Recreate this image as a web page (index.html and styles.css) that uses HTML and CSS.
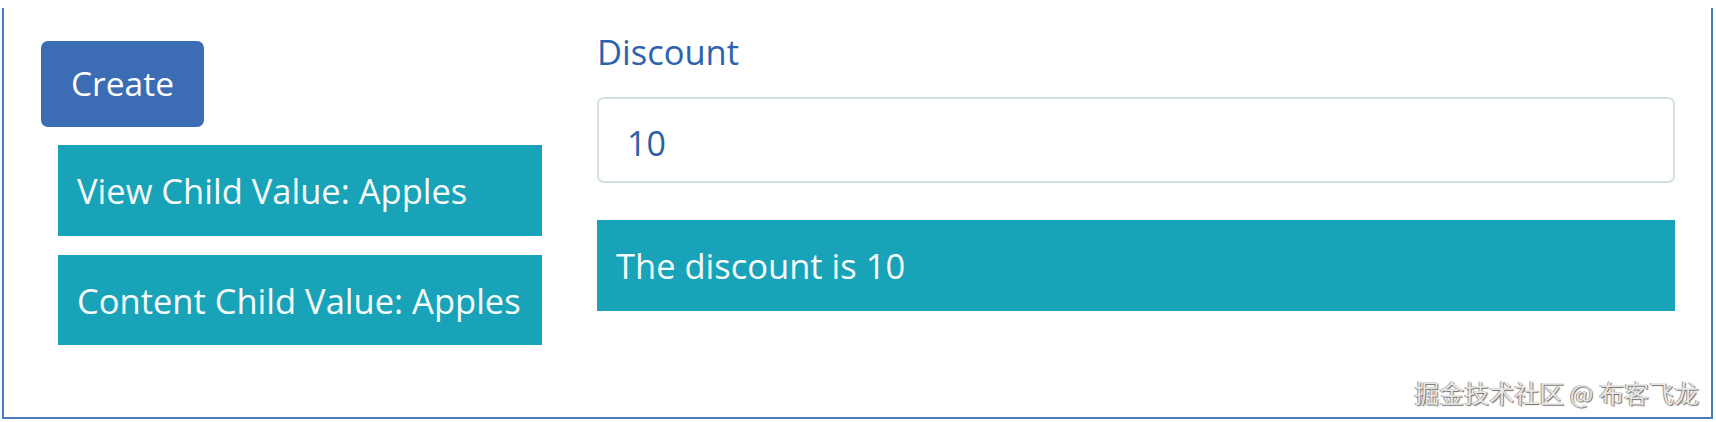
FILE: index.html
```html
<!DOCTYPE html>
<html lang="en">
<head>
<meta charset="utf-8">
<title>Discount</title>
<link rel="stylesheet" href="styles.css">
</head>
<body>
<div class="frame">
  <div class="left-col">
    <button class="btn-create" type="button">Create</button>
    <div class="child-box child-box-first">View Child Value: Apples</div>
    <div class="child-box child-box-second">Content Child Value: Apples</div>
  </div>
  <div class="right-col">
    <label class="field-label" for="discount">Discount</label>
    <input class="field-input" id="discount" type="text" value="10">
    <div class="result-box">The discount is 10</div>
  </div>
  <div class="watermark">掘金技术社区 @ 布客飞龙</div>
</div>
</body>
</html>
```

FILE: styles.css
```css
html, body {
  margin: 0;
  padding: 0;
  background: #ffffff;
}

body {
  font-family: "Open Sans", "Noto Sans", sans-serif;
  width: 1716px;
  height: 422px;
  overflow: hidden;
}

.frame {
  position: relative;
  box-sizing: border-box;
  margin: 8px 3px 0 2px;
  height: 411px;
  border: 2px solid #4a7dbd;
  border-top: none;
  padding: 20px 36px 0 37px;
  display: flex;
  gap: 55px;
}

.left-col {
  width: 501px;
  flex: 0 0 501px;
  padding-top: 13px;
  display: flex;
  flex-direction: column;
  align-items: flex-start;
}

.btn-create {
  box-sizing: border-box;
  width: 163px;
  height: 86px;
  border: none;
  border-radius: 7px;
  background: #3c6cb4;
  color: #ffffff;
  font-family: "Open Sans", "Noto Sans", sans-serif;
  font-size: 33.5px;
  padding: 0;
  line-height: 1;
}

.child-box {
  box-sizing: border-box;
  width: 484px;
  margin-left: 17px;
  background: #19a3b8;
  color: #f7fbfb;
  font-size: 34.5px;
  display: flex;
  align-items: center;
  padding-left: 19px;
  white-space: nowrap;
}

.child-box-first {
  margin-top: 18px;
  height: 91px;
}

.child-box-second {
  margin-top: 19px;
  height: 90px;
}

.right-col {
  flex: 1 1 auto;
  display: flex;
  flex-direction: column;
}

.field-label {
  display: block;
  color: #2d63ad;
  font-size: 34.5px;
  line-height: 48px;
  height: 48px;
}

.field-input {
  box-sizing: border-box;
  margin-top: 21px;
  width: 100%;
  height: 86px;
  border: 2px solid #d3e1e1;
  border-radius: 7px;
  padding: 6px 0 0 28px;
  font-family: "Open Sans", "Noto Sans", sans-serif;
  font-size: 34px;
  color: #2d5fa6;
  background: #ffffff;
  outline: none;
}

.result-box {
  box-sizing: border-box;
  margin-top: 37px;
  height: 91px;
  background: #19a3b8;
  color: #f7fbfb;
  font-size: 34.5px;
  display: flex;
  align-items: center;
  padding-left: 19px;
}

.watermark {
  position: absolute;
  right: 12px;
  bottom: 10px;
  font-family: "Noto Sans CJK SC", "Noto Sans", sans-serif;
  font-size: 25px;
  line-height: 30px;
  color: #e6e6e6;
  text-shadow: 1px 1px 1px #6f6f6f, -1px 0 0 #9a9a9a;
  white-space: nowrap;
}
```
